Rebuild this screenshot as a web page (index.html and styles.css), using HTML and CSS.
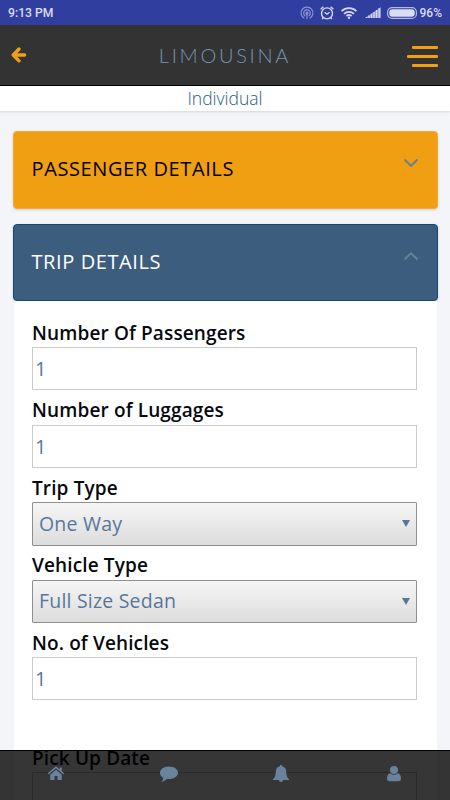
FILE: index.html
```html
<!DOCTYPE html>
<html lang="en">
<head>
<meta charset="utf-8">
<title>Limousina</title>
<link rel="stylesheet" href="styles.css">
</head>
<body>
<div class="screen">
  <div class="status">
    <span class="time">9:13 PM</span>
    <div class="status-icons">
      <svg class="cast" width="14" height="14" viewBox="0 0 14 14" fill="none" stroke="#8c94d0" stroke-width="1.2"><path d="M4.3 12.2A5.9 5.9 0 1 1 9.7 12.2M5.2 9.9A3.3 3.3 0 1 1 8.8 9.9"/><circle cx="7" cy="7.2" r="1" fill="#7b84c9"/><path d="M7 8v5"/></svg>
      <svg class="alarm" width="14" height="14" viewBox="0 0 14 14" fill="none" stroke="#d3d7f0" stroke-width="1.4"><circle cx="7" cy="7.4" r="5.5"/><path d="M.7 3.1 3.4.8M13.3 3.1 10.6.8M4.6 6.2 7 8.200l2.500-2M3.300 11.500l-1.100 1.600M10.700 11.500l1.100 1.600"/></svg>
      <svg class="wifi" width="16" height="12" viewBox="0 0 16 12" fill="none" stroke="#d3d7f0" stroke-width="1.7"><path d="M.6 4.200a10.500 10.500 0 0 1 14.800 0M3 6.900a7 7 0 0 1 10 0M5.400 9.200a3.800 3.800 0 0 1 5.200 0"/><circle cx="8" cy="10.700" r="1.200" fill="#d3d7f0" stroke="none"/></svg>
      <svg class="signal" width="16" height="11" viewBox="0 0 16 11"><path fill="#8f97d2" d="M0 11 16 0v11z"/><path stroke="#d3d7f0" stroke-width="1.300" d="M1.500 11v-1M4 11V8.500M6.500 11V6.800M9 11V5M11.500 11V3M14.200 11V1"/></svg>
      <svg class="battery" width="30" height="12" viewBox="0 0 30 12"><rect x=".6" y=".6" width="28.800" height="10.800" rx="4.500" fill="none" stroke="#b2b8e1" stroke-width="1.200"/><rect x="2.300" y="2.300" width="25.400" height="7.400" rx="3" fill="#dadcf0"/></svg>
      <span class="percent">96%</span>
    </div>
  </div>
  <header class="header">
    <svg class="back" width="16" height="16" viewBox="0 0 16 16" fill="none" stroke="#f29f12" stroke-width="3.300" stroke-linecap="round" stroke-linejoin="round"><path d="M8 2 2.200 8 8 13.800M2.500 8h11.200"/></svg>
    <h1 class="brand">LIMOUSINA</h1>
    <div class="menu"><i></i><i></i><i></i></div>
  </header>
  <div class="subbar"><span>Individual</span></div>
  <main class="content">
    <section class="panel passenger"><h2>PASSENGER DETAILS</h2>
      <svg class="chev" width="16" height="10" viewBox="0 0 16 10" fill="none" stroke="#697f94" stroke-width="2"><path d="M1.500 1.500 8 7.800l6.500-6.300"/></svg></section>
    <section class="panel trip"><h2>TRIP DETAILS</h2>
      <svg class="chev" width="16" height="10" viewBox="0 0 16 10" fill="none" stroke="#6b839a" stroke-width="1.800"><path d="M1.500 8.500 8 2.200l6.500 6.300"/></svg></section>
    <form class="form">
      <div class="field"><label><span>Number Of Passengers</span></label><div class="input">1</div></div>
      <div class="field"><label><span>Number of Luggages</span></label><div class="input">1</div></div>
      <div class="field"><label><span>Trip Type</span></label><div class="select"><span>One Way</span><b></b></div></div>
      <div class="field"><label><span>Vehicle Type</span></label><div class="select"><span>Full Size Sedan</span><b></b></div></div>
      <div class="field"><label><span>No. of Vehicles</span></label><div class="input">1</div></div>
      <div class="field pickup"><label><span>Pick Up Date</span></label><div class="input"></div></div>
    </form>
  </main>
  <nav class="tabs">
    <svg width="18" height="18" viewBox="0 0 18 18" fill="#69839d"><path d="M9 4.700 3.300 9.500V15h4.200v-4h3v4h4.200V9.500z"/><path d="M9 1.200.8 8.200l1 1.100L9 3.300l7.200 6 1-1.100-2.500-2.100V2.400h-2v2z"/></svg>
    <svg width="18" height="18" viewBox="0 0 18 18" fill="#69839d"><path d="M9 1.500c5 0 9 2.800 9 6.300s-4 6.300-9 6.300c-.8 0-1.500-.1-2.200-.2C5.500 15.200 3.700 16.500 1.500 16.700c1-1 1.600-2.200 1.700-3.800C1.200 11.700 0 9.900 0 7.800c0-3.500 4-6.300 9-6.300z"/></svg>
    <svg width="18" height="18" viewBox="0 0 18 18" fill="#69839d"><path d="M9 0c.8 0 1.200.5 1.200 1.300 2.600.5 3.900 2.400 4 5.200.1 4 .8 6 3 7.800v.7h-6.100a2.100 2.100 0 0 1-4.200 0H.8v-.7c2.200-1.800 2.900-3.800 3-7.800.1-2.800 1.400-4.700 4-5.200C7.800.5 8.200 0 9 0z"/></svg>
    <svg width="18" height="18" viewBox="0 0 18 18" fill="#69839d"><circle cx="9" cy="4.900" r="4"/><path d="M5.300 8.200c2.200 2 5.200 2 7.400 0 2.200.3 3.300 2.500 3.300 5.500 0 1.500-1 2.500-2.400 2.500H4.400C3 16.200 2 15.200 2 13.700c0-3 1.100-5.200 3.300-5.500z"/></svg>
  </nav>
</div>
</body>
</html>
```
FILE: styles.css
```css
* { box-sizing: border-box; }
body { margin: 0; font-family: "Open Sans", sans-serif; color: #587899; }
.screen { position: relative; width: 450px; height: 800px; overflow: hidden; background: #f4f5f8; }
.status { height: 25px; background: #303f9f; color: #dadcf0; display: flex; justify-content: space-between; align-items: center; padding: 0 8px; font: 500 12.200px Roboto, sans-serif; }
.status-icons { display: flex; align-items: center; }
.cast { margin-right: 6px; }
.alarm { margin-right: 7px; }
.wifi { margin-right: 8px; }
.signal { margin-right: 6px; }
.battery { margin-right: 4px; }
.percent { font-size: 12px; margin-left: -1px; }
.header { height: 61px; background: #333; border-bottom: 1px solid #000; display: flex; align-items: center; justify-content: space-between; padding: 0 12px 0 11px; }
.brand { margin: 0 0 0 16px; font: 300 20px Lato, sans-serif; letter-spacing: 2.700px; color: #7795b3; }
.menu { display: flex; flex-direction: column; align-items: flex-end; gap: 6px; margin-top: 2px; }
.menu i { width: 26px; height: 3px; border-radius: 1px; background: #f29f12; }
.menu i:nth-child(2) { width: 31px; }
.subbar { height: 25px; background: #fff; text-align: center; font: 300 17.500px/25px "Open Sans", sans-serif; box-shadow: 0 1px 2px rgba(0,0,0,.12); color: #2c5a80; }
.content { padding: 20px 12.500px 0; }
.panel { height: 77px; border-radius: 4px; display: flex; justify-content: space-between; padding: 0 18px; box-shadow: 0 1px 3px rgba(0,0,0,.15); }
.panel h2 { margin: 0; font-size: 20px; font-weight: 400; line-height: 74px; letter-spacing: .6px; }
.passenger { height: 77.500px; background: #f19f12; color: #000; border: 1px solid #f5a932; margin-bottom: 15.500px; }
.trip { background: #3d5d7e; color: #fff; border: 1px solid #114970; }
.chev { margin-top: 26px; }
.form { background: #fff; margin: 0 1px; padding: 11.500px 19.500px 0 18.500px; height: 520px; }
.field label { display: block; height: 34.500px; padding-top: 8.300px; font-size: 19px; line-height: 25px; font-weight: 600; letter-spacing: .13px; color: #05090f; }
.input, .select { height: 43px; font-size: 19.500px; line-height: 42px; letter-spacing: .2px; }
.input { border: 1px solid #ccc; padding-left: 2px; font-size: 20px; }
.select { height: 43.500px; margin-bottom: -.5px; border: 1px solid #8f8f8f; border-radius: 1px; background: linear-gradient(#f6f6f6, #dcdcdc); display: flex; justify-content: space-between; align-items: center; padding: 0 6px; }
.select b { border: 4px solid transparent; border-top: 7px solid #587899; border-bottom: 0; }
.pickup { margin-top: 37.500px; }
.tabs { position: absolute; left: 0; right: 0; bottom: 0; height: 50px; border-top: 1px solid #000; background: rgba(0,0,0,.79); display: flex; justify-content: space-around; padding-top: 14px; }
```
